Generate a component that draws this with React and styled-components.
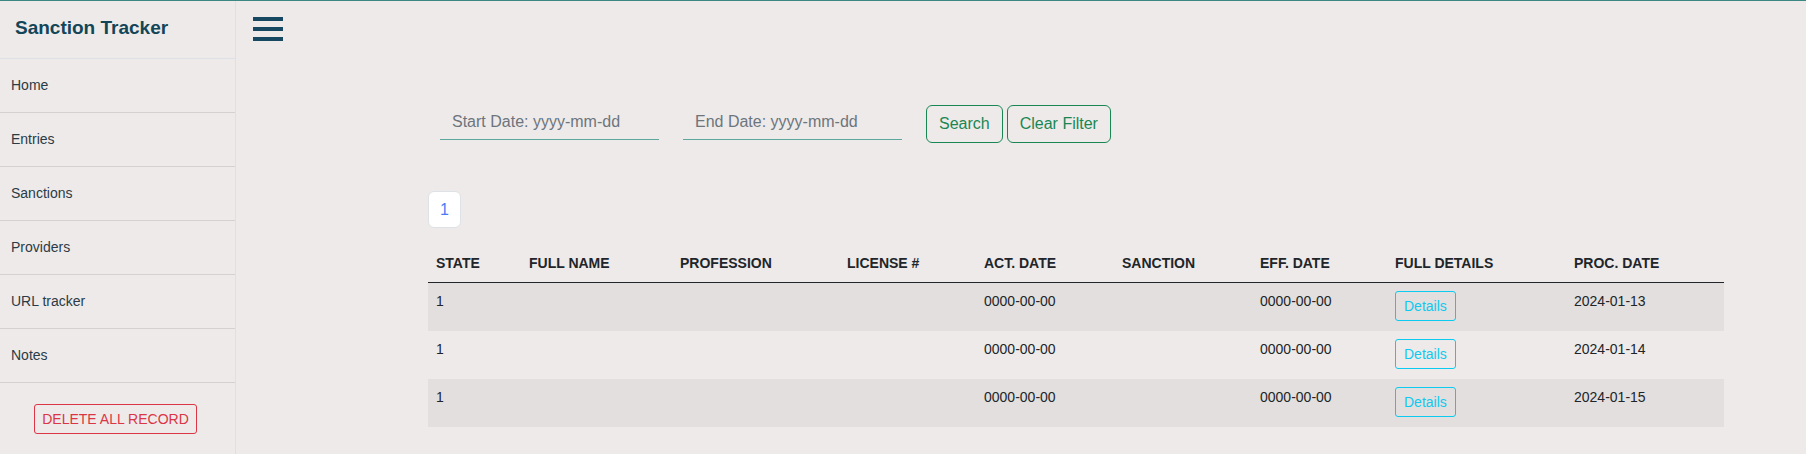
import React from "react";
import styled, { createGlobalStyle } from "styled-components";

const GlobalStyle = createGlobalStyle`
  html, body {
    margin: 0;
    padding: 0;
    background-color: #eeeae9;
    font-family: "Liberation Sans", Arial, sans-serif;
  }
  * {
    box-sizing: border-box;
  }
`;

const Page = styled.div`
  display: flex;
  min-height: 100vh;
  border-top: 1px solid #3b8784;
  background-color: #eeeae9;
`;

const Sidebar = styled.aside`
  width: 236px;
  flex-shrink: 0;
  border-right: 1px solid #dde0e6;
  display: flex;
  flex-direction: column;
`;

const Brand = styled.div`
  height: 58px;
  display: flex;
  align-items: center;
  padding: 0 0 4px 15px;
  border-bottom: 1px solid #dde0e6;
  font-size: 19px;
  font-weight: bold;
  color: #134558;
`;

const NavItem = styled.a`
  height: 54px;
  display: flex;
  align-items: center;
  padding: 0 0 2px 11px;
  border-bottom: 1px solid #d4d1d0;
  font-size: 14px;
  color: #2a3b47;
  text-decoration: none;
`;

const SidebarFooter = styled.div`
  display: flex;
  justify-content: center;
  padding: 21px 4px 0 0;
`;

const DangerButton = styled.button`
  height: 30px;
  padding: 0 7px;
  background: transparent;
  border: 1px solid #dc3545;
  border-radius: 3px;
  color: #dc3545;
  font-family: inherit;
  font-size: 14px;
  text-transform: uppercase;
`;

const Main = styled.main`
  flex: 1;
  display: flex;
  flex-direction: column;
  padding: 16px 0 0 17px;
`;

const Burger = styled.button`
  width: 30px;
  display: flex;
  flex-direction: column;
  gap: 6px;
  padding: 0;
  background: none;
  border: none;
`;

const BurgerBar = styled.span`
  display: block;
  height: 4px;
  width: 30px;
  background-color: #164862;
`;

const Content = styled.div`
  width: 1296px;
  margin-left: 175px;
`;

const FilterRow = styled.div`
  display: flex;
  align-items: flex-start;
  margin-top: 63px;
  padding-left: 12px;
`;

const DateInput = styled.input`
  width: 219px;
  height: 36px;
  margin-right: 24px;
  padding: 0 12px;
  background: transparent;
  border: none;
  border-bottom: 1px solid #5da7a0;
  outline: none;
  font-family: inherit;
  font-size: 16px;
  color: #212529;

  &::placeholder {
    color: #6c757d;
  }
`;

const OutlineButton = styled.button`
  height: 38px;
  margin: 1px 4px 0 0;
  padding: 0 12px;
  background: transparent;
  border: 1px solid #198754;
  border-radius: 6px;
  color: #198754;
  font-family: inherit;
  font-size: 16px;
`;

const Pagination = styled.div`
  display: flex;
  margin-top: 48px;
`;

const PageLink = styled.span`
  height: 37px;
  padding: 0 11px;
  display: flex;
  align-items: center;
  background-color: #ffffff;
  border: 1px solid #dee2e6;
  border-radius: 6px;
  color: #4a7cf5;
  font-size: 16px;
`;

const Table = styled.table`
  width: 1296px;
  margin-top: 17px;
  border-collapse: collapse;
  table-layout: fixed;
  font-size: 14px;
  color: #212529;
`;

const HeadCell = styled.th`
  padding: 8px;
  line-height: 21px;
  text-align: left;
  font-weight: bold;
  text-transform: uppercase;
  border-bottom: 1px solid #212529;
`;

const Row = styled.tr`
  background-color: ${(p) => (p.$striped ? "#e2dfde" : "transparent")};
`;

const Cell = styled.td`
  padding: 8px 8px 10px;
  height: 48px;
  line-height: 21px;
  vertical-align: top;
`;

const DetailsButton = styled.button`
  height: 30px;
  padding: 0 8px;
  background: transparent;
  border: 1px solid #0dcaf0;
  border-radius: 3px;
  color: #0dcaf0;
  font-family: inherit;
  font-size: 14px;
`;

const navLinks = ["Home", "Entries", "Sanctions", "Providers", "URL tracker", "Notes"];

const columns = [
  { label: "State", width: 93 },
  { label: "Full Name", width: 151 },
  { label: "Profession", width: 167 },
  { label: "License #", width: 137 },
  { label: "Act. Date", width: 138 },
  { label: "Sanction", width: 138 },
  { label: "Eff. Date", width: 135 },
  { label: "Full Details", width: 179 },
  { label: "Proc. Date", width: 158 }
];

const records = [
  { state: "1", actDate: "0000-00-00", effDate: "0000-00-00", procDate: "2024-01-13" },
  { state: "1", actDate: "0000-00-00", effDate: "0000-00-00", procDate: "2024-01-14" },
  { state: "1", actDate: "0000-00-00", effDate: "0000-00-00", procDate: "2024-01-15" }
];

const App = () => {
  return (
    <>
      <GlobalStyle />
      <Page>
        <Sidebar>
          <Brand>Sanction Tracker</Brand>
          {navLinks.map((link) => (
            <NavItem key={link} href="#">
              {link}
            </NavItem>
          ))}
          <SidebarFooter>
            <DangerButton>Delete All Record</DangerButton>
          </SidebarFooter>
        </Sidebar>

        <Main>
          <Burger aria-label="menu">
            <BurgerBar />
            <BurgerBar />
            <BurgerBar />
          </Burger>

          <Content>
            <FilterRow>
              <DateInput type="text" placeholder="Start Date: yyyy-mm-dd" />
              <DateInput type="text" placeholder="End Date: yyyy-mm-dd" />
              <OutlineButton>Search</OutlineButton>
              <OutlineButton>Clear Filter</OutlineButton>
            </FilterRow>

            <Pagination>
              <PageLink>1</PageLink>
            </Pagination>

            <Table>
              <colgroup>
                {columns.map((col) => (
                  <col key={col.label} style={{ width: col.width }} />
                ))}
              </colgroup>
              <thead>
                <tr>
                  {columns.map((col) => (
                    <HeadCell key={col.label}>{col.label}</HeadCell>
                  ))}
                </tr>
              </thead>
              <tbody>
                {records.map((rec, i) => (
                  <Row key={rec.procDate} $striped={i % 2 === 0}>
                    <Cell>{rec.state}</Cell>
                    <Cell />
                    <Cell />
                    <Cell />
                    <Cell>{rec.actDate}</Cell>
                    <Cell />
                    <Cell>{rec.effDate}</Cell>
                    <Cell>
                      <DetailsButton>Details</DetailsButton>
                    </Cell>
                    <Cell>{rec.procDate}</Cell>
                  </Row>
                ))}
              </tbody>
            </Table>
          </Content>
        </Main>
      </Page>
    </>
  );
};

export default App;
